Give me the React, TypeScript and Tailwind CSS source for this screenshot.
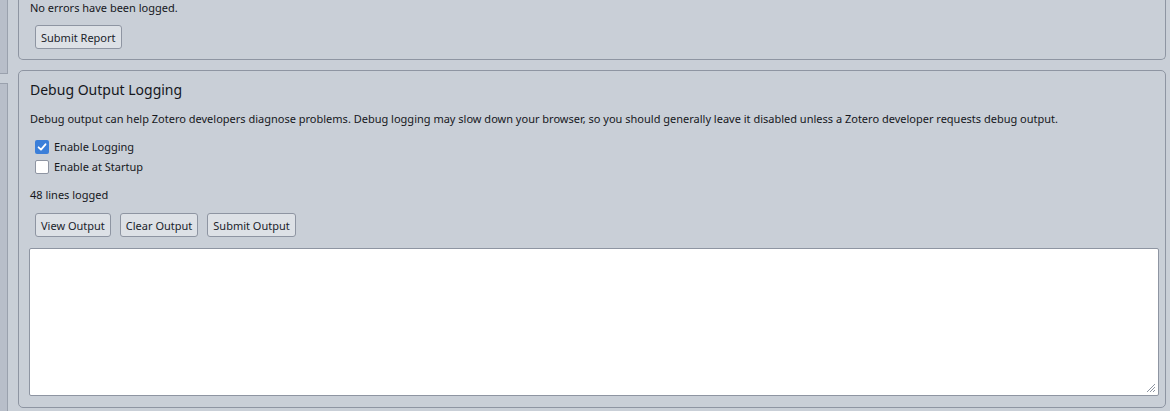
import React from 'react';

const Btn: React.FC<{ label: string }> = ({ label }) => (
  <button className="h-[24px] px-[5px] rounded-[3px] border border-[#8e95a2] bg-[#dde1e6] text-[11px] leading-none text-[#20232a]">
    {label}
  </button>
);

const App: React.FC = () => {
  return (
    <div
      className="w-[1170px] h-[411px] overflow-hidden bg-[#c9cfd7] flex text-[#15171c]"
      style={{ fontFamily: '"Noto Sans", "Open Sans", sans-serif' }}
    >
      {/* left pane edge */}
      <div className="w-[8px] shrink-0 flex flex-col">
        <div className="h-[74px] bg-[#b8bec9] border-r border-b border-[#9aa1ad]" />
        <div className="h-[9px]" />
        <div className="flex-1 bg-[#b8bec9] border-r border-t border-[#9aa1ad]" />
      </div>

      <div className="w-[1148px] ml-[10px] flex flex-col">
        {/* error report section */}
        <div className="h-[60px] shrink-0 border-x border-b border-[#8e95a2] rounded-b-[5px] pl-[11px] flex flex-col">
          <div className="text-[11px] leading-[15px]">No errors have been logged.</div>
          <div className="mt-[10px] pl-[5px] flex">
            <Btn label="Submit Report" />
          </div>
        </div>

        {/* debug output section */}
        <div className="mt-[10px] h-[338px] shrink-0 border border-[#8e95a2] rounded-[5px] pl-[10px] pr-[6px] flex flex-col">
          <h2 className="mt-[9px] pl-[1px] text-[14px] leading-[19px] font-normal">Debug Output Logging</h2>
          <p className="mt-[12px] pl-[1px] text-[11px] leading-[15px]">
            Debug output can help Zotero developers diagnose problems. Debug logging may slow down your browser, so you should generally leave it disabled unless a Zotero developer requests debug output.
          </p>
          <div className="mt-[14px] pl-[6px] flex flex-col gap-[6px]">
            <label className="flex items-center gap-[5px] text-[11px] leading-[14px]">
              <span className="w-[14px] h-[14px] rounded-[2px] bg-[#3b7fd9] flex items-center justify-center">
                <svg width="10" height="10" viewBox="0 0 10 10">
                  <path d="M1.6 5.3 L4 7.7 L8.5 2.3" stroke="#fff" strokeWidth="1.8" fill="none" strokeLinecap="round" strokeLinejoin="round" />
                </svg>
              </span>
              Enable Logging
            </label>
            <label className="flex items-center gap-[5px] text-[11px] leading-[14px]">
              <span className="w-[14px] h-[14px] rounded-[2px] bg-white border border-[#8e95a2]" />
              Enable at Startup
            </label>
          </div>
          <div className="mt-[13px] pl-[1px] text-[11px] leading-[15px]">48 lines logged</div>
          <div className="mt-[11px] pl-[6px] flex gap-[9px]">
            <Btn label="View Output" />
            <Btn label="Clear Output" />
            <Btn label="Submit Output" />
          </div>
          <div className="mt-[11px] h-[148px] bg-white border border-[#8e95a2] rounded-[2px] relative">
            <svg className="absolute right-[2px] bottom-[2px]" width="10" height="10" viewBox="0 0 10 10">
              <path d="M9 1 L1 9 M9 4 L4 9 M9 7 L7 9" stroke="#8e95a2" strokeWidth="1" />
            </svg>
          </div>
        </div>
      </div>
    </div>
  );
};

export default App;
